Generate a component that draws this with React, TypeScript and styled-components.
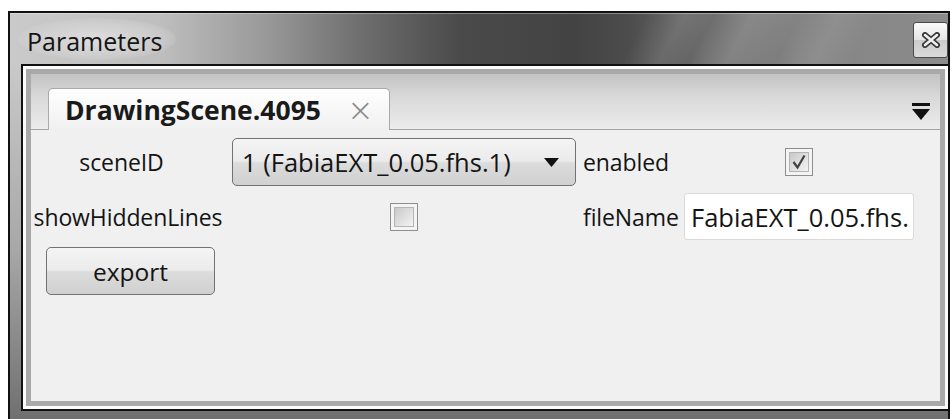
import React from 'react';
import styled, { createGlobalStyle } from 'styled-components';

const GlobalStyle = createGlobalStyle`
  html, body {
    margin: 0;
    padding: 0;
    background: #ffffff;
    overflow: hidden;
  }
  body {
    font-family: "Open Sans", "Noto Sans", sans-serif;
    color: #141414;
  }
`;

const Window = styled.div`
  box-sizing: border-box;
  margin: 11px 0 0 8px;
  width: 942px;
  height: 420px;
  border: 2px solid #111;
  border-bottom: none;
  display: flex;
  flex-direction: column;
  background: linear-gradient(180deg, #c8c8c8 0%, #9a9a9a 60%, #555 100%);
`;

/* caption strip with the aero-ish dark band */
const TitleBar = styled.div`
  height: 51px;
  flex: none;
  display: flex;
  align-items: center;
  justify-content: space-between;
  padding-left: 8px;
  background:
    linear-gradient(118deg, transparent 0%, transparent 66%, rgba(255, 255, 255, 0.1) 70%, transparent 73%, rgba(255, 255, 255, 0.12) 77%, transparent 82%, rgba(255, 255, 255, 0.08) 86%, transparent 90%),
    linear-gradient(90deg, #cacaca 0%, #bebebe 16%, #9a9a9a 27%, #6c6c6c 38%, #4a4a4a 48%, #434343 60%, #4c4c4c 66%, #6c6c6c 74%, #838383 84%, #8c8c8c 100%);
  box-shadow: inset 0 1px 0 rgba(255, 255, 255, 0.35);
`;

const Caption = styled.span`
  font-size: 25px;
  padding: 6px 14px 2px 9px;
  color: #151515;
  border-radius: 50%;
  background: radial-gradient(ellipse at center, rgba(226, 226, 226, 0.85) 0%, rgba(214, 214, 214, 0.55) 55%, rgba(200, 200, 200, 0) 80%);
`;

const CloseBox = styled.div`
  box-sizing: border-box;
  width: 35px;
  height: 36px;
  margin-top: 2px;
  border: 1px solid #4a4a4a;
  border-radius: 3px;
  background: linear-gradient(180deg, #fbfbfb 0%, #e4e4e4 50%, #cbcbcb 51%, #dadada 100%);
  display: flex;
  align-items: center;
  justify-content: center;
`;

const Frame = styled.div`
  flex: 1;
  display: flex;
  padding-left: 11px;
  background: linear-gradient(180deg, #c9c9c9 0%, #a8a8a8 50%, #6c6c6c 100%);
`;

const Dock = styled.div`
  box-sizing: border-box;
  flex: 1;
  height: 347px;
  border: 2px solid #111;
  border-right: none;
  padding: 8px;
  background: #f0f0f0;
  box-shadow: inset 0 0 0 3px #fbfbfb, inset 0 0 0 8px #a9a9a9;
  display: flex;
  flex-direction: column;
`;

const TabBar = styled.div`
  height: 55px;
  flex: none;
  display: flex;
  align-items: flex-end;
  justify-content: space-between;
  padding: 0 10px 0 17px;
  border-bottom: 1px solid #a4a4a4;
  background: linear-gradient(180deg, #c3c3c3 0%, #d8d8d8 40%, #ececec 100%);
`;

const Tab = styled.div`
  box-sizing: border-box;
  height: 42px;
  margin-bottom: -1px;
  display: flex;
  align-items: center;
  gap: 26px;
  padding: 0 15px 0 16px;
  border: 1px solid #a9a9a9;
  border-bottom: none;
  border-radius: 5px 5px 0 0;
  background: linear-gradient(180deg, #ffffff 0%, #f6f6f6 60%, #f0f0f0 100%);
`;

const TabTitle = styled.span`
  font-weight: 700;
  font-size: 26.5px;
  color: #1a1a1a;
`;

const TabClose = styled.span`
  font-size: 32px;
  line-height: 1;
  color: #8a8a8a;
  font-family: "DejaVu Sans", sans-serif;
  font-weight: 300;
`;

const MenuButton = styled.div`
  margin-bottom: 8px;
  display: flex;
`;

const Form = styled.div`
  display: grid;
  grid-template-columns: 194px 344px 94px 230px;
  grid-template-rows: 48px 47px 48px;
  column-gap: 7px;
  row-gap: 7px;
  padding-top: 8px;
  align-items: center;
`;

const Label = styled.span<{ $align?: 'left' | 'center' | 'right'; $inset?: number }>`
  font-size: 23px;
  color: #141414;
  white-space: nowrap;
  text-align: ${(p) => p.$align ?? 'center'};
  padding-right: ${(p) => p.$inset ?? 0}px;
  letter-spacing: -0.1px;
`;

const Combo = styled.div`
  box-sizing: border-box;
  height: 48px;
  display: flex;
  align-items: center;
  justify-content: space-between;
  padding: 0 16px 0 9px;
  border: 1px solid #727272;
  border-radius: 5px;
  background: linear-gradient(180deg, #f4f4f4 0%, #ebebeb 48%, #dcdcdc 52%, #d0d0d0 100%);
  font-size: 25.5px;
`;

const CheckCell = styled.div`
  display: flex;
  justify-content: center;
`;

const Check = styled.div`
  box-sizing: border-box;
  width: 28px;
  height: 28px;
  border: 1px solid #8e8e8e;
  background: #f4f4f4;
  padding: 3px;
  display: flex;
`;

const CheckInner = styled.div`
  flex: 1;
  border: 1px solid #b4b4b4;
  background: linear-gradient(135deg, #c8c8c8 0%, #e0e0e0 55%, #f4f4f4 100%);
  display: flex;
  align-items: center;
  justify-content: center;
`;

const TextField = styled.div`
  box-sizing: border-box;
  height: 47px;
  display: flex;
  align-items: center;
  padding: 0 6px;
  overflow: hidden;
  white-space: nowrap;
  border: 1px solid #dadada;
  border-radius: 3px;
  background: #ffffff;
  font-size: 25.5px;
`;

const PushButton = styled.button`
  box-sizing: border-box;
  margin-left: 15px;
  width: 169px;
  height: 48px;
  border: 1px solid #727272;
  border-radius: 5px;
  background: linear-gradient(180deg, #f4f4f4 0%, #ebebeb 48%, #dcdcdc 52%, #d0d0d0 100%);
  font-family: inherit;
  font-size: 24.5px;
  color: #141414;
  padding: 0;
`;

const CheckBox = ({ checked }: { checked?: boolean }) => (
  <CheckCell>
    <Check>
      <CheckInner>
        {checked && (
          <svg width="16" height="16" viewBox="0 0 16 16">
            <path d="M2.5 8 L6.5 13.5 L13.5 1.5" fill="none" stroke="#404040" strokeWidth="2.2" />
          </svg>
        )}
      </CheckInner>
    </Check>
  </CheckCell>
);

export default function App() {
  return (
    <>
      <GlobalStyle />
      <Window>
        <TitleBar>
          <Caption>Parameters</Caption>
          <CloseBox>
            <svg width="20" height="16" viewBox="0 0 20 16">
              <path
                d="M4 3 L16 13 M16 3 L4 13"
                stroke="#3c3c3c"
                strokeWidth="6"
                strokeLinecap="round"
              />
              <path
                d="M4 3 L16 13 M16 3 L4 13"
                stroke="#f2f2f2"
                strokeWidth="2.4"
                strokeLinecap="round"
              />
            </svg>
          </CloseBox>
        </TitleBar>
        <Frame>
          <Dock>
            <TabBar>
              <Tab>
                <TabTitle>DrawingScene.4095</TabTitle>
                <TabClose>×</TabClose>
              </Tab>
              <MenuButton>
                <svg width="18" height="18" viewBox="0 0 18 18">
                  <rect x="0" y="0" width="18" height="3" fill="#111" />
                  <polygon points="0,6 18,6 9,17" fill="#111" />
                </svg>
              </MenuButton>
            </TabBar>
            <Form>
              <Label $inset={13}>sceneID</Label>
              <Combo>
                <span>1 (FabiaEXT_0.05.fhs.1)</span>
                <svg width="15" height="9" viewBox="0 0 15 9">
                  <polygon points="0,0 15,0 7.5,9" fill="#111" />
                </svg>
              </Combo>
              <Label $align="left">enabled</Label>
              <CheckBox checked />

              <Label>showHiddenLines</Label>
              <CheckBox />
              <Label $align="right" $inset={3}>fileName</Label>
              <TextField>FabiaEXT_0.05.fhs.</TextField>

              <PushButton>export</PushButton>
            </Form>
          </Dock>
        </Frame>
      </Window>
    </>
  );
}
